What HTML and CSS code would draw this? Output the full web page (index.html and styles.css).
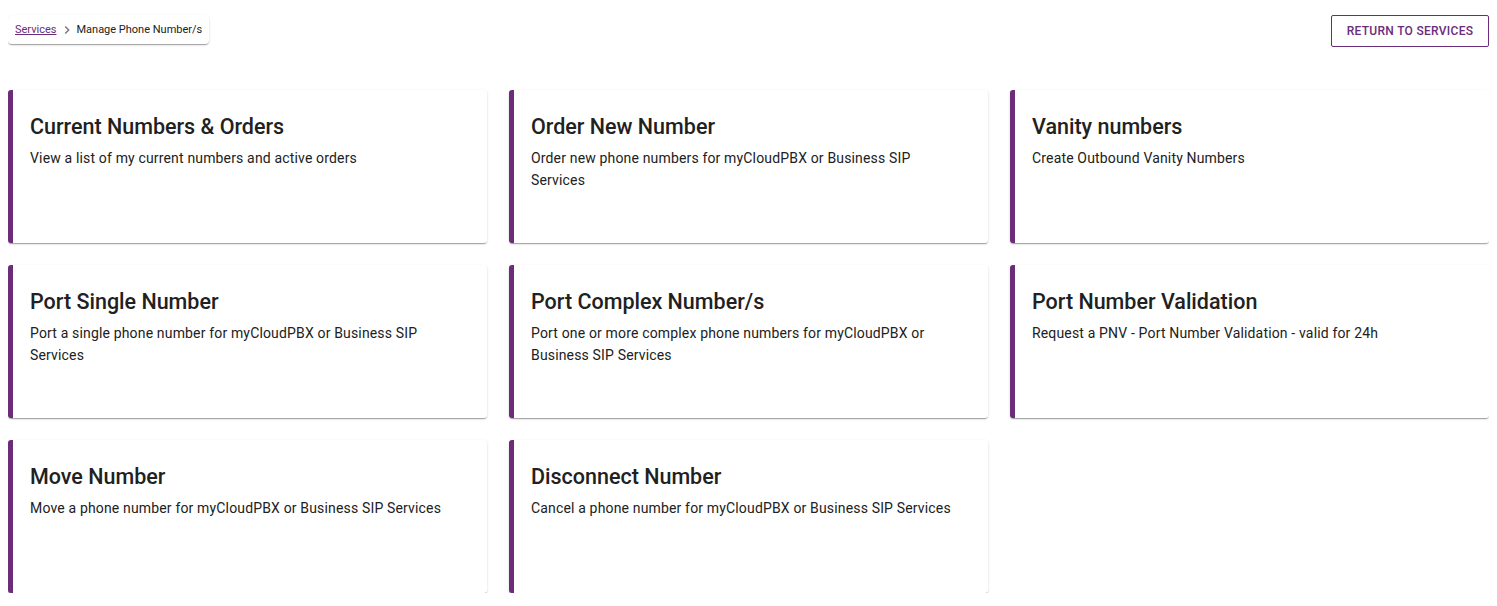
FILE: index.html
```html
<!DOCTYPE html>
<html lang="en">
<head>
<meta charset="utf-8">
<title>Manage Phone Number/s</title>
<link rel="stylesheet" href="styles.css">
</head>
<body>
<div class="topbar">
  <nav class="crumbs">
    <a class="crumb-link" href="#">Services</a>
    <svg class="chev" viewBox="0 0 24 24" width="16" height="16"><path d="M10 6 8.59 7.41 13.17 12l-4.58 4.59L10 18l6-6z" fill="#757575"/></svg>
    <span class="crumb-current">Manage Phone Number/s</span>
  </nav>
  <button class="return-btn">RETURN TO SERVICES</button>
</div>
<main class="grid">
  <div class="card"><h2 class="card-title">Current Numbers &amp; Orders</h2><p class="card-desc">View a list of my current numbers and active orders</p></div>
  <div class="card"><h2 class="card-title">Order New Number</h2><p class="card-desc">Order new phone numbers for myCloudPBX or Business SIP Services</p></div>
  <div class="card"><h2 class="card-title">Vanity numbers</h2><p class="card-desc">Create Outbound Vanity Numbers</p></div>
  <div class="card"><h2 class="card-title">Port Single Number</h2><p class="card-desc">Port a single phone number for myCloudPBX or Business SIP Services</p></div>
  <div class="card"><h2 class="card-title">Port Complex Number/s</h2><p class="card-desc">Port one or more complex phone numbers for myCloudPBX or Business SIP Services</p></div>
  <div class="card"><h2 class="card-title">Port Number Validation</h2><p class="card-desc">Request a PNV - Port Number Validation - valid for 24h</p></div>
  <div class="card"><h2 class="card-title">Move Number</h2><p class="card-desc">Move a phone number for myCloudPBX or Business SIP Services</p></div>
  <div class="card"><h2 class="card-title">Disconnect Number</h2><p class="card-desc">Cancel a phone number for myCloudPBX or Business SIP Services</p></div>
</main>
</body>
</html>
```
FILE: styles.css
```css
* { box-sizing: border-box; }
body {
  margin: 8px;
  font-family: Roboto, "Liberation Sans", Arial, sans-serif;
  color: #212121;
  background: #fff;
}
.topbar {
  display: flex;
  justify-content: space-between;
  align-items: flex-start;
  padding-top: 7px;
}
.crumbs {
  display: flex;
  align-items: center;
  height: 29px;
  padding: 0 7px;
  border-radius: 4px;
  background: #fff;
  box-shadow: 0 2px 1px -1px rgba(0,0,0,.2), 0 1px 1px rgba(0,0,0,.14), 0 1px 3px rgba(0,0,0,.12);
  font-size: 11px;
  white-space: nowrap;
}
.crumb-link {
  color: #6b2c7a;
  text-decoration: underline;
}
.chev { margin: 0 1px 0 3px; }
.crumb-current { color: #212121; }
.return-btn {
  width: 158px;
  height: 32px;
  border: 1.5px solid #6b2c7a;
  border-radius: 2px;
  background: #fff;
  color: #6b2c7a;
  font-family: Roboto, "Liberation Sans", Arial, sans-serif;
  font-size: 12px;
  font-weight: 500;
  letter-spacing: 0.3px;
  padding: 0;
}
.grid {
  display: grid;
  grid-template-columns: repeat(3, 1fr);
  gap: 22px;
  margin-top: 43px;
}
.card {
  height: 153px;
  border-left: 5px solid #6b2c7a;
  border-radius: 3px;
  background: #fff;
  padding: 22px 24px 0 17px;
  box-shadow: 0 2px 1px -1px rgba(0,0,0,.2), 0 1px 1px rgba(0,0,0,.14), 0 1px 3px rgba(0,0,0,.12);
}
.card-title {
  margin: 0;
  font-size: 21.5px;
  font-weight: 500;
  line-height: 30px;
  color: #212121;
}
.card-desc {
  margin: 5px 0 0;
  font-size: 14px;
  line-height: 22px;
  letter-spacing: 0.16px;
  color: #212121;
}
```
